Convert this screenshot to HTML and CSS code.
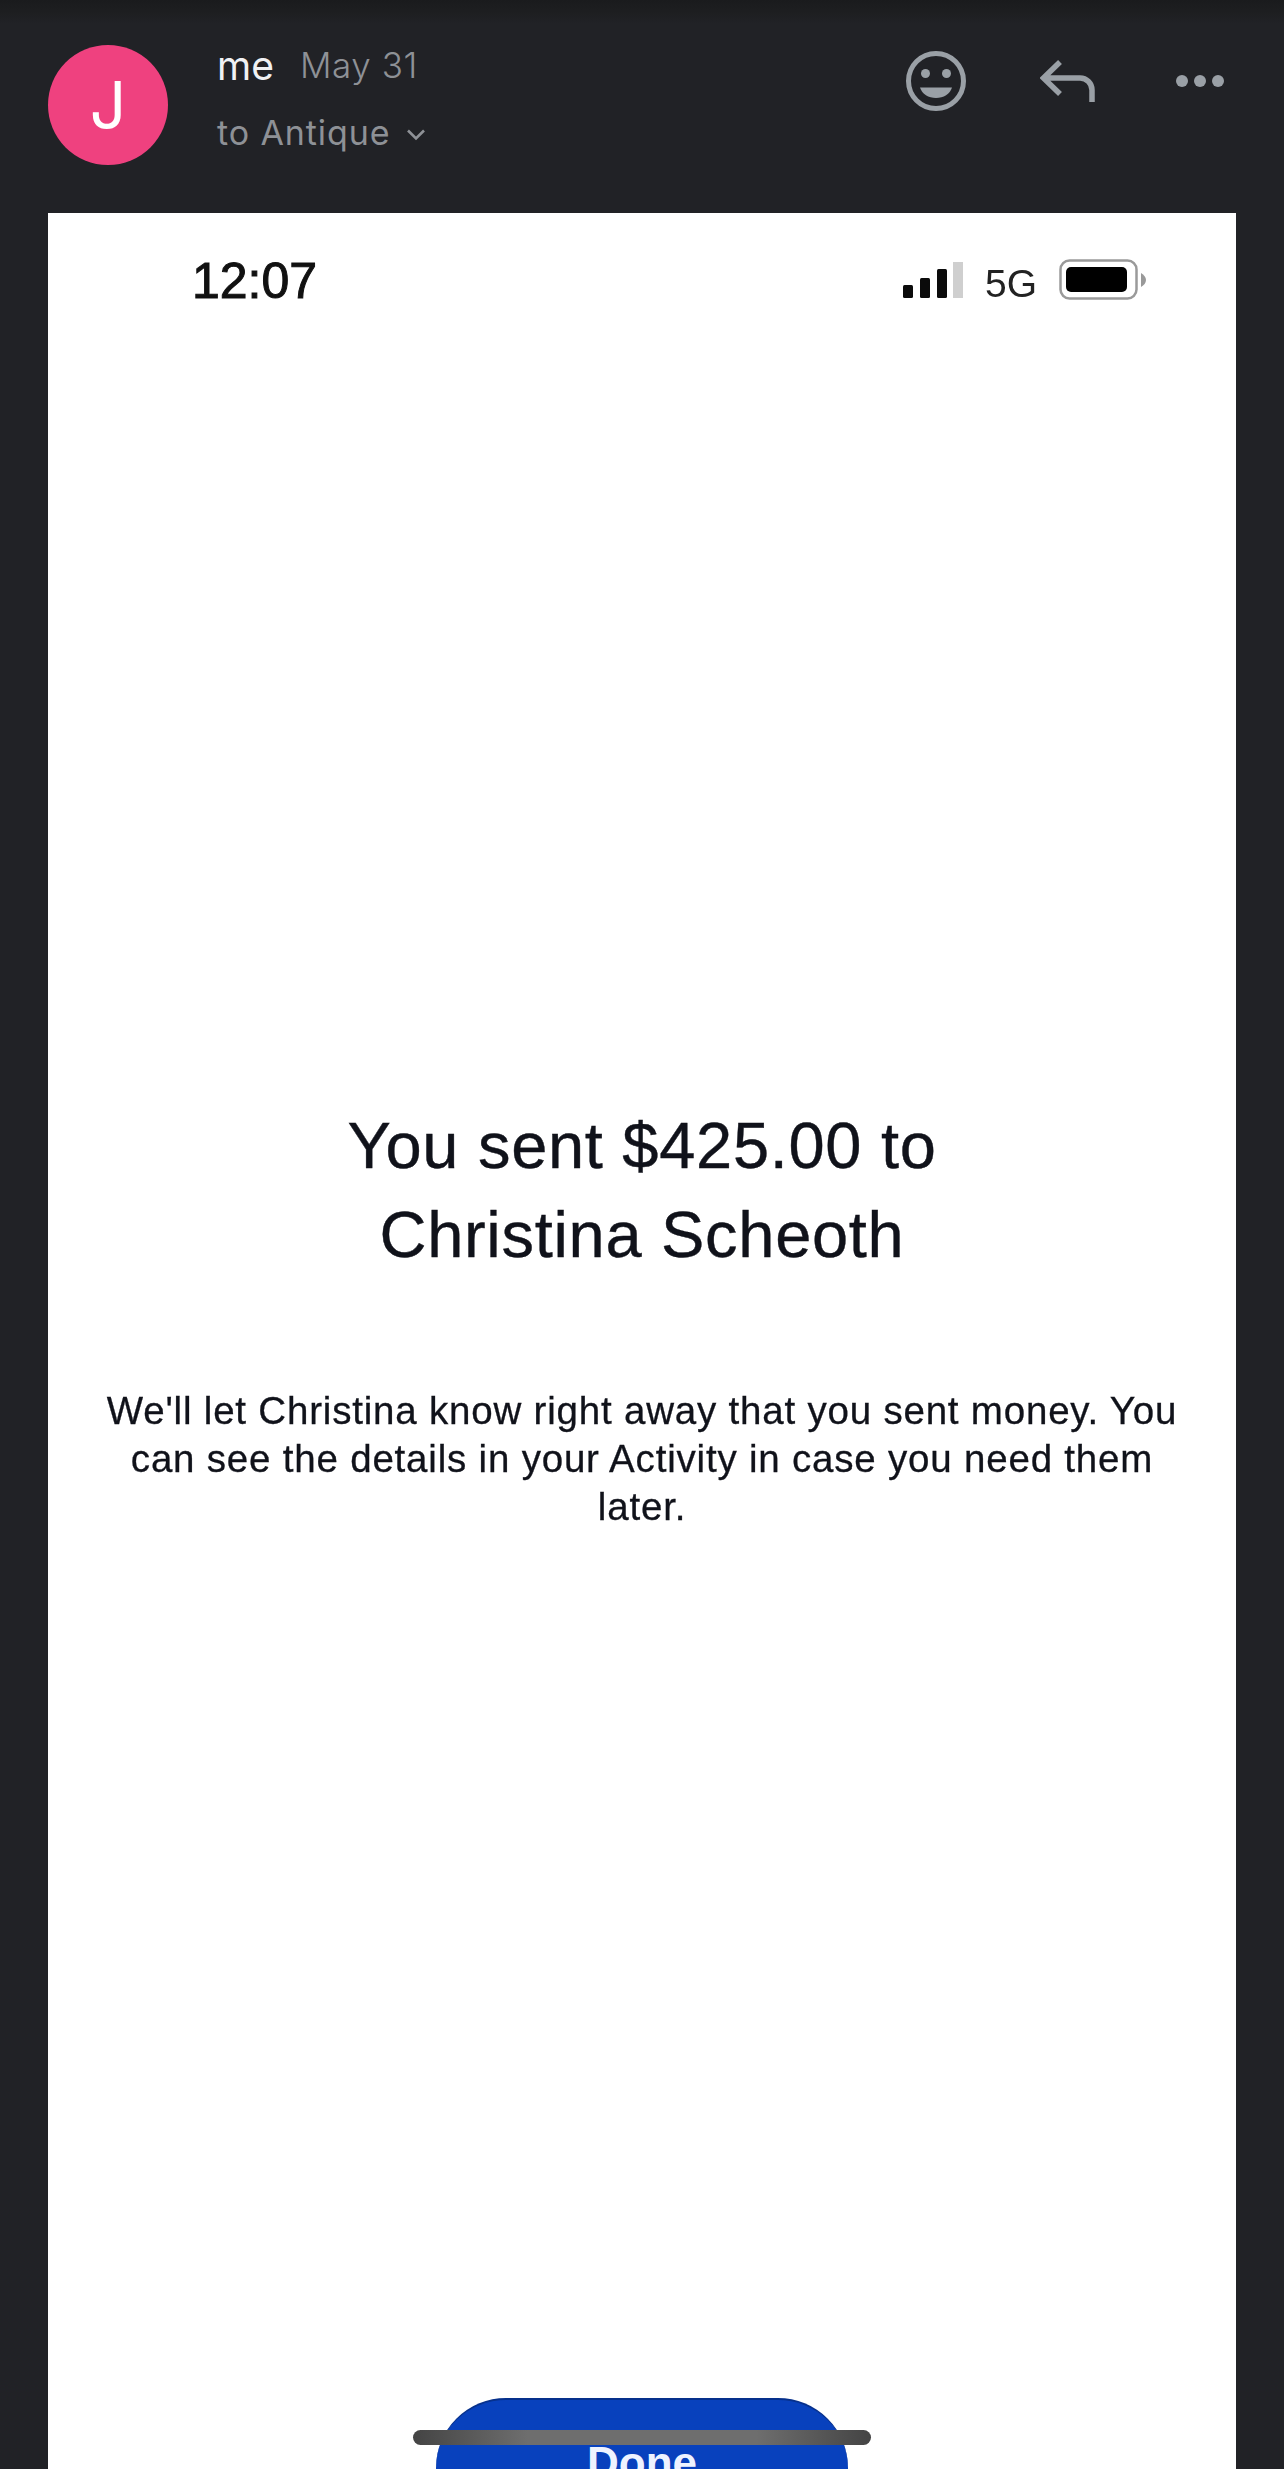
FILE: index.html
```html
<!DOCTYPE html>
<html lang="en">
<head>
<meta charset="utf-8">
<title>Message</title>
<link rel="stylesheet" href="styles.css">
</head>
<body>
<div class="page">
  <header class="header">
    <div class="avatar">J</div>
    <div class="info">
      <div class="line-top"><span class="sender">me</span><span class="date">May 31</span></div>
      <div class="line-to"><span>to Antique</span>
        <svg class="chevron" viewBox="0 0 20 12" width="20" height="12"><path d="M2 1.5 L10 9.5 L18 1.5" fill="none" stroke="#8e9196" stroke-width="2.6"/></svg>
      </div>
    </div>
    <div class="actions">
      <svg class="icon" viewBox="0 0 64 64" width="64" height="64">
        <circle cx="32" cy="32" r="27.5" fill="none" stroke="#9aa0a6" stroke-width="5"/>
        <circle cx="21.5" cy="24.5" r="4.5" fill="#9aa0a6"/>
        <circle cx="42.5" cy="24.5" r="4.5" fill="#9aa0a6"/>
        <path d="M16 38.5 H48 C46 45 39.5 49 32 49 C24.5 49 18 45 16 38.5 Z" fill="#9aa0a6"/>
      </svg>
      <svg class="icon" viewBox="0 0 56 64" width="56" height="64">
        <path d="M20 13 L3.5 29 L20 45 M3.5 29 H40 A12 12 0 0 1 52 41 V53" fill="none" stroke="#9aa0a6" stroke-width="5.5"/>
      </svg>
      <svg class="icon icon-more" viewBox="0 0 52 64" width="52" height="64">
        <circle cx="8" cy="32" r="6" fill="#9aa0a6"/>
        <circle cx="26" cy="32" r="6" fill="#9aa0a6"/>
        <circle cx="44" cy="32" r="6" fill="#9aa0a6"/>
      </svg>
    </div>
  </header>
  <main class="shot">
    <div class="status">
      <span class="clock">12:07</span>
      <div class="status-right">
        <svg viewBox="0 0 60 60" width="60" height="60">
          <rect x="0" y="34" width="10" height="13" rx="1.5" fill="#0b0b0b"/>
          <rect x="17" y="27" width="10" height="20" rx="1.5" fill="#0b0b0b"/>
          <rect x="34" y="18" width="10" height="29" rx="1.5" fill="#0b0b0b"/>
          <rect x="50" y="11" width="10" height="36" fill="#cfcfcf"/>
        </svg>
        <span class="network">5G</span>
        <svg viewBox="0 0 87 60" width="87" height="60">
          <rect x="1.5" y="9.5" width="76" height="38" rx="9" fill="none" stroke="#9a9a9a" stroke-width="2.5"/>
          <rect x="7" y="16" width="61" height="25" rx="5" fill="#000"/>
          <path d="M82 22 C85 24 87 26 87 29 C87 32 85 34 82 36 Z" fill="#999"/>
        </svg>
      </div>
    </div>
    <h1 class="title">You sent $425.00 to<br>Christina Scheoth</h1>
    <p class="copy">We'll let Christina know right away that you sent money. You can see the details in your Activity in case you need them later.</p>
    <div class="done">Done</div>
  </main>
  <div class="scrollbar"></div>
</div>
</body>
</html>
```
FILE: styles.css
```css
* { box-sizing: border-box; }
html, body { margin: 0; padding: 0; background: #212226; }
.page {
  position: relative;
  width: 1284px;
  height: 2469px;
  overflow: hidden;
  background: linear-gradient(#1a1b1d 0, #1e1f21 14px, #212226 24px);
  font-family: Inter, "Liberation Sans", sans-serif;
}
.header {
  display: flex;
  align-items: flex-start;
  height: 213px;
  padding: 41px 58px 0 48px;
}
.avatar {
  width: 120px;
  height: 120px;
  margin-top: 4px;
  border-radius: 50%;
  background: #ef417f;
  color: #fff;
  font-size: 64px;
  font-weight: 400;
  line-height: 120px;
  text-align: center;
  flex: none;
}
.info { flex: 1; margin-left: 49px; }
.line-top { display: flex; align-items: flex-start; gap: 26px; height: 50px; }
.sender { color: #f0f1f3; font-size: 39px; font-weight: 400; line-height: 50px; }
.date { color: #8e9196; font-size: 35px; font-weight: 300; line-height: 48px; letter-spacing: 0.6px; }
.line-to {
  display: flex;
  align-items: center;
  gap: 16px;
  margin-top: 17px;
  color: #8e9196;
  font-size: 34px;
  font-weight: 400;
  line-height: 50px;
  letter-spacing: 0.9px;
}
.chevron { margin-top: 3px; }
.actions { display: flex; gap: 72px; margin-top: 8px; flex: none; }
.icon { display: block; }
.icon-more { margin-left: 6px; }
.shot {
  width: 1188px;
  height: 2256px;
  margin-left: 48px;
  padding-top: 38px;
  background: #fff;
  color: #10121a;
  font-family: "Liberation Sans", Arial, sans-serif;
}
.status {
  display: flex;
  justify-content: space-between;
  align-items: flex-start;
  height: 60px;
  padding: 0 90px 0 144px;
}
.clock { font-size: 50px; line-height: 60px; color: #111; -webkit-text-stroke: 1px #111; filter: blur(0.7px); }
.status-right { display: flex; align-items: flex-start; filter: blur(0.7px); }
.network { margin: 0 22px; font-size: 39px; line-height: 65px; color: #222; }
.title {
  margin: 790px 0 0;
  font-size: 65px;
  font-weight: 400;
  line-height: 89px;
  letter-spacing: 0.7px;
  text-align: center;
  -webkit-text-stroke: 0.4px #10121a;
  filter: blur(0.7px);
}
.copy {
  width: 1090px;
  margin: 108px auto 0;
  font-size: 38.5px;
  line-height: 48px;
  text-align: center;
  letter-spacing: 0.8px;
  -webkit-text-stroke: 0.3px #10121a;
  filter: blur(0.7px);
}
.done {
  width: 412px;
  height: 140px;
  margin: 867px auto 0;
  padding-top: 13px;
  border-radius: 70px;
  border-top: 2px solid #06308c;
  background: #0841bd;
  color: #eef3ff;
  font-size: 44px;
  font-weight: 700;
  line-height: 100px;
  text-align: center;
}
.scrollbar {
  position: absolute;
  left: 413px;
  top: 2430px;
  width: 458px;
  height: 15px;
  border-radius: 8px;
  background: linear-gradient(90deg, #444 0, #6e6e6e 25%, #6e6e6e 75%, #444 100%);
}
```
